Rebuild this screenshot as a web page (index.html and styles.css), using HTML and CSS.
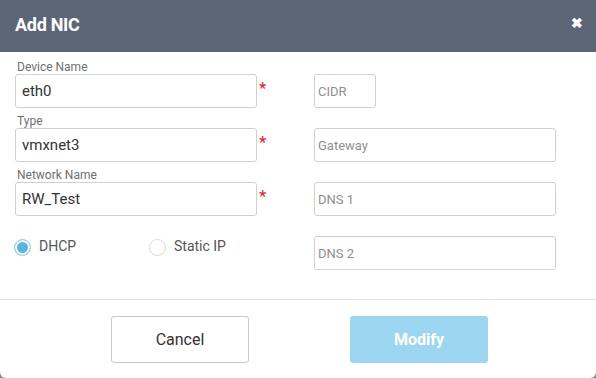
FILE: index.html
```html
<!DOCTYPE html>
<html lang="en">
<head>
    <meta charset="UTF-8">
    <meta name="viewport" content="width=device-width, initial-scale=1.0">
    <title>Add NIC</title>
    <link rel="stylesheet" href="styles.css">
</head>
<body>
    <div class="modal">
        <div class="modal-header">
            <h1>Add NIC</h1>
            <span class="close">&#10006;</span>
        </div>

        <div class="modal-body">
            <div class="row">
                <div class="field">
                    <label for="deviceName">Device Name</label>
                    <div class="input-wrap">
                        <input type="text" id="deviceName" value="eth0">
                        <span class="req">*</span>
                    </div>
                </div>
                <div class="field right">
                    <input type="text" class="short" placeholder="CIDR">
                </div>
            </div>

            <div class="row">
                <div class="field">
                    <label for="type">Type</label>
                    <div class="input-wrap">
                        <input type="text" id="type" value="vmxnet3">
                        <span class="req">*</span>
                    </div>
                </div>
                <div class="field right">
                    <input type="text" placeholder="Gateway">
                </div>
            </div>

            <div class="row">
                <div class="field">
                    <label for="networkName">Network Name</label>
                    <div class="input-wrap">
                        <input type="text" id="networkName" value="RW_Test">
                        <span class="req">*</span>
                    </div>
                </div>
                <div class="field right">
                    <input type="text" placeholder="DNS 1">
                </div>
            </div>

            <div class="row">
                <div class="field">
                    <div class="radios">
                        <div class="radio"><span class="dot checked"></span>DHCP</div>
                        <div class="radio"><span class="dot"></span>Static IP</div>
                    </div>
                </div>
                <div class="field right">
                    <input type="text" placeholder="DNS 2">
                </div>
            </div>
        </div>

        <div class="modal-footer">
            <button class="btn cancel">Cancel</button>
            <button class="btn modify">Modify</button>
        </div>
    </div>
</body>
</html>
```

FILE: styles.css
```css
body {
    margin: 0;
    background: #8a8a8a;
    font-family: Roboto, "Liberation Sans", Arial, sans-serif;
}
.modal {
    width: 596px;
    height: 378px;
    background: white;
    border-radius: 0 0 6px 6px;
    overflow: hidden;
}
.modal-header {
    height: 52px;
    background: #5d6676;
    display: flex;
    align-items: center;
    justify-content: space-between;
    padding: 0 13px 0 15px;
    box-sizing: border-box;
}
.modal-header h1 {
    margin: 0 0 4px 0;
    font-size: 18px;
    font-weight: bold;
    color: white;
    letter-spacing: -0.3px;
}
.close {
    color: white;
    font-size: 14px;
    font-weight: bold;
    margin-bottom: 6px;
}
.modal-body {
    padding: 8px 0 0 15px;
    height: 248px;
    box-sizing: border-box;
    border-bottom: 1px solid #e2e2e2;
}
.row {
    display: flex;
    align-items: flex-end;
    margin-bottom: 6px;
}
.field {
    width: 299px;
}
.field.right {
    width: auto;
}
.field label {
    display: block;
    font-size: 12px;
    line-height: 14px;
    color: #6f6f6f;
    padding-left: 2px;
}
.input-wrap {
    display: flex;
    align-items: flex-start;
}
input {
    width: 242px;
    height: 34px;
    box-sizing: border-box;
    border: 1px solid #d0d0d0;
    border-radius: 3px;
    padding: 0 6px;
    font-family: Roboto, "Liberation Sans", Arial, sans-serif;
    font-size: 15px;
    color: #333;
}
.field.right input {
    padding: 0 3px;
    font-size: 13px;
}
input.short {
    width: 62px;
}
input::placeholder {
    color: #8f8f8f;
}
.req {
    color: #e0202a;
    font-size: 17px;
    line-height: 17px;
    margin: 6px 0 0 2px;
}
.radios {
    display: flex;
    height: 34px;
    margin-top: 14px;
    align-items: flex-start;
}
.radio {
    display: flex;
    align-items: center;
    font-size: 14px;
    color: #555;
    width: 135px;
    height: 20px;
}
.dot {
    flex: none;
    width: 17px;
    height: 17px;
    box-sizing: border-box;
    border: 1px solid #d8d8d8;
    border-radius: 50%;
    margin: 3px 8px 0 -1px;
    background: white;
}
.dot.checked {
    border-color: #9fd0e8;
    box-shadow: inset 0 0 0 2px white;
    background: #5ab4de;
}
.modal-footer {
    display: flex;
    justify-content: center;
    gap: 101px;
    padding-top: 16px;
    padding-left: 3px;
}
.btn {
    width: 138px;
    height: 47px;
    border-radius: 3px;
    font-family: Roboto, "Liberation Sans", Arial, sans-serif;
    font-size: 16px;
}
.cancel {
    background: white;
    border: 1px solid #c8c8c8;
    color: #333;
}
.modify {
    background: #9dd6f1;
    border: none;
    color: white;
    font-weight: bold;
}
```
